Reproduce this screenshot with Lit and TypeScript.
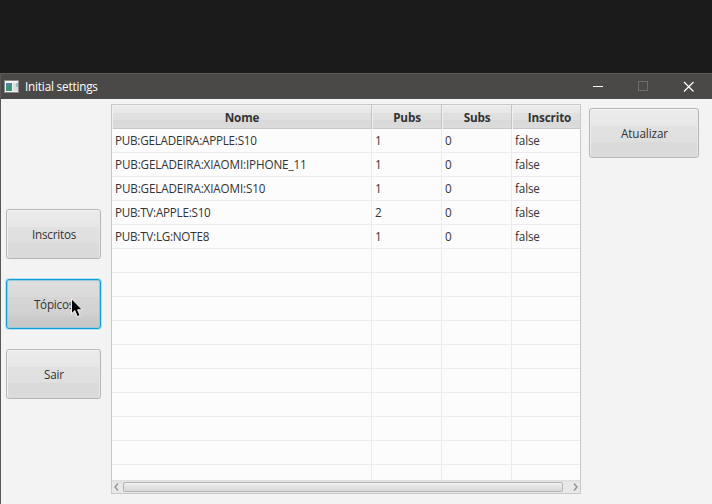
import { LitElement, html, css, svg } from "lit";
import { customElement, property } from "lit/decorators.js";
import { classMap } from "lit/directives/class-map.js";

interface Topic {
  name: string;
  pubs: number;
  subs: number;
  subscribed: boolean;
  loose?: boolean;
}

const TOPICS: Topic[] = [
  { name: "PUB:GELADEIRA:APPLE:S10", pubs: 1, subs: 0, subscribed: false },
  { name: "PUB:GELADEIRA:XIAOMI:IPHONE_11", pubs: 1, subs: 0, subscribed: false, loose: true },
  { name: "PUB:GELADEIRA:XIAOMI:S10", pubs: 1, subs: 0, subscribed: false, loose: true },
  { name: "PUB:TV:APPLE:S10", pubs: 2, subs: 0, subscribed: false },
  { name: "PUB:TV:LG:NOTE8", pubs: 1, subs: 0, subscribed: false },
];

const VISIBLE_ROWS = 15;

@customElement("title-bar")
export class TitleBar extends LitElement {
  @property() heading = "";

  static styles = css`
    :host {
      display: flex;
      align-items: center;
      box-sizing: border-box;
      height: 26px;
      padding-left: 3px;
      background: #4b4947;
      border-top: 1px solid #5b5a58;
      color: #fff;
      font-size: 11.7px;
    }
    .icon { display: block; margin-right: 5px; }
    .title { flex: 1; letter-spacing: -0.17px; padding-bottom: 2px; }
    .controls { display: flex; }
    .control { display: block; width: 45px; height: 25px; }
  `;

  render() {
    return html`
      <svg class="icon" width="16" height="14" viewBox="0 0 16 14" shape-rendering="crispEdges">
        <rect x="0" y="0" width="15" height="13" fill="#8b8987" />
        <rect x="1" y="1" width="13" height="11" fill="#f4f4f4" />
        <rect x="2" y="3" width="6" height="8" fill="#5284a0" />
        <rect x="2" y="6" width="5" height="5" fill="#3f9178" />
        <rect x="9" y="3" width="3" height="8" fill="#dedede" />
        <rect x="12" y="3" width="2" height="4" fill="#9cc2c0" />
        <rect x="12" y="7" width="2" height="4" fill="#dcdcdc" />
      </svg>
      <span class="title">${this.heading}</span>
      <div class="controls">
        ${[
          svg`<path d="M16 12.5h10" stroke="#fff" />`,
          svg`<rect x="16.5" y="7.5" width="9" height="9" stroke="#6f6d6b" />`,
          svg`<path d="M17 8l9.500 9.500M26.500 8L17 17.500" stroke="#fff" stroke-width="1.200" />`,
        ].map(
          (shape) => html`<svg class="control" viewBox="0 0 45 25" fill="none">${shape}</svg>`
        )}
      </div>
    `;
  }
}

@customElement("push-button")
export class PushButton extends LitElement {
  @property() label = "";
  @property({ type: Boolean, reflect: true }) pressed = false;

  static styles = css`
    :host { display: block; height: 50px; }
    .button {
      display: flex;
      align-items: center;
      justify-content: center;
      box-sizing: border-box;
      width: 100%;
      height: 100%;
      padding: 0 0 1px 1px;
      border: 1px solid #b5b5b5;
      border-radius: 3px;
      background: linear-gradient(#ebebeb 0, #e7e7e7 17px, #e1e1e1 17px, #dfdfdf 33px, #dadada 33px, #dbdbdb 100%);
      box-shadow: inset 0 1px #f6f6f6, inset 1px 0 #efefef, inset -1px 0 #e9e9e9;
      color: #333;
      font: inherit;
      letter-spacing: var(--button-spacing, -0.22px);
    }
    .pressed {
      border-color: #0f9dd6;
      background: linear-gradient(#dedede 0, #dadada 17px, #d5d5d5 17px, #d2d2d2 33px, #c9c9c9 40px, #c7c7c7 100%);
      box-shadow: 0 0 0 1px #b9e2f2, inset 0 0 0 1px #8fcbe2;
    }
  `;

  render() {
    return html`<button class=${classMap({ button: true, pressed: this.pressed })}>${this.label}</button>`;
  }
}

@customElement("topic-table")
export class TopicTable extends LitElement {
  @property({ attribute: false }) topics: Topic[] = [];

  static styles = css`
    :host {
      display: flex;
      flex-direction: column;
      box-sizing: border-box;
      width: 470px;
      height: 390px;
      border: 1px solid #c8c8c8;
      background: #fcfcfc;
      overflow: hidden;
    }
    .head, .row {
      display: grid;
      grid-template-columns: 260px 70px 70px 75px;
      flex: none;
      box-sizing: border-box;
      height: 24px;
    }
    .head {
      background: linear-gradient(#f4f4f4 0, #f4f4f4 1px, #ebebeb 1px, #e7e7e7 8px, #e0e0e0 8px, #dfdfdf 15px, #d9d9d9 15px, #dbdbdb 100%);
      border-bottom: 1px solid #c8c8c8;
      font-weight: 700;
      text-align: center;
      line-height: 24px;
      letter-spacing: -0.15px;
    }
    .head .cell { padding-left: 1px; border-color: #c5c5c5; box-shadow: inset 1px 0 #f0f0f0; }
    .body { flex: 1; overflow: hidden; }
    .row { border-bottom: 1px solid #ebebeb; line-height: 23px; }
    .cell {
      box-sizing: border-box;
      border-right: 1px solid #ebebeb;
      white-space: nowrap;
    }
    .row .cell { padding-left: 3px; }
    .name { letter-spacing: -0.25px; }
    .loose { letter-spacing: -0.14px; }
    .flag { letter-spacing: -0.15px; }
    .scroll {
      display: flex;
      align-items: center;
      flex: none;
      box-sizing: border-box;
      height: 13px;
      background: linear-gradient(#dedede, #e8e8e8 3px, #e8e8e8);
    }
    .arrow { display: block; width: 11px; height: 13px; flex: none; }
    .thumb {
      box-sizing: border-box;
      width: 440px;
      height: 10px;
      border: 1px solid #b4b4b4;
      border-radius: 2px;
      background: linear-gradient(#f2f2f2, #e2e2e2 50%, #d8d8d8);
    }
    .gap { flex: 1; }
  `;

  private arrow(d: string) {
    return html`<svg class="arrow" viewBox="0 0 11 13"><path d=${d} fill="none" stroke="#8f8f8f" stroke-width="1.300" /></svg>`;
  }

  render() {
    const rows = Array.from({ length: VISIBLE_ROWS }, (_, i) => this.topics[i]);
    return html`
      <div class="head">
        ${["Nome", "Pubs", "Subs", "Inscrito"].map((h) => html`<div class="cell">${h}</div>`)}
      </div>
      <div class="body">
        ${rows.map(
          (t) => html`<div class="row">
            <div class=${classMap({ cell: true, name: true, loose: !!t?.loose })}>${t?.name}</div>
            <div class="cell">${t?.pubs}</div>
            <div class="cell">${t?.subs}</div>
            <div class="cell flag">${t ? String(t.subscribed) : ""}</div>
          </div>`
        )}
      </div>
      <div class="scroll">
        ${this.arrow("M6 3.500L3 7l3 3.500")}
        <div class="thumb"></div>
        <div class="gap"></div>
        ${this.arrow("M5 3.500L8 7l-3 3.500")}
      </div>
    `;
  }
}

@customElement("app-root")
export class AppRoot extends LitElement {
  static styles = css`
    :host {
      display: block;
      box-sizing: border-box;
      position: relative;
      width: 712px;
      height: 504px;
      padding-top: 73px;
      overflow: hidden;
      background: #1b1b1b;
      color: #333;
      font: 11.7px "Open Sans", "Noto Sans", sans-serif;
    }
    .window {
      box-sizing: border-box;
      height: 431px;
      border-left: 1px solid #5a5856;
      background: #f3f3f3;
    }
    .content { display: flex; align-items: flex-start; padding: 5px 0 0 5px; }
    .menu {
      display: flex;
      flex-direction: column;
      gap: 20px;
      width: 95px;
      margin: 105px 10px 0 0;
    }
    .refresh { --button-spacing: -0.08px; width: 110px; margin: 4px 0 0 8px; }
    .pointer { position: absolute; left: 71px; top: 298px; }
  `;

  render() {
    return html`
      <div class="window">
        <title-bar heading="Initial settings"></title-bar>
        <div class="content">
          <div class="menu">
            <push-button label="Inscritos"></push-button>
            <push-button label="Tópicos" pressed></push-button>
            <push-button label="Sair"></push-button>
          </div>
          <topic-table .topics=${TOPICS}></topic-table>
          <push-button class="refresh" label="Atualizar"></push-button>
        </div>
      </div>
      <svg class="pointer" width="13" height="20" viewBox="0 0 13 20">
        <path d="M.5.8v15l3.300-3.200 2.500 6 2.800-1.200-2.500-5.600h4.700z" fill="#000" stroke="#fff" stroke-width=".9" />
      </svg>
    `;
  }
}
